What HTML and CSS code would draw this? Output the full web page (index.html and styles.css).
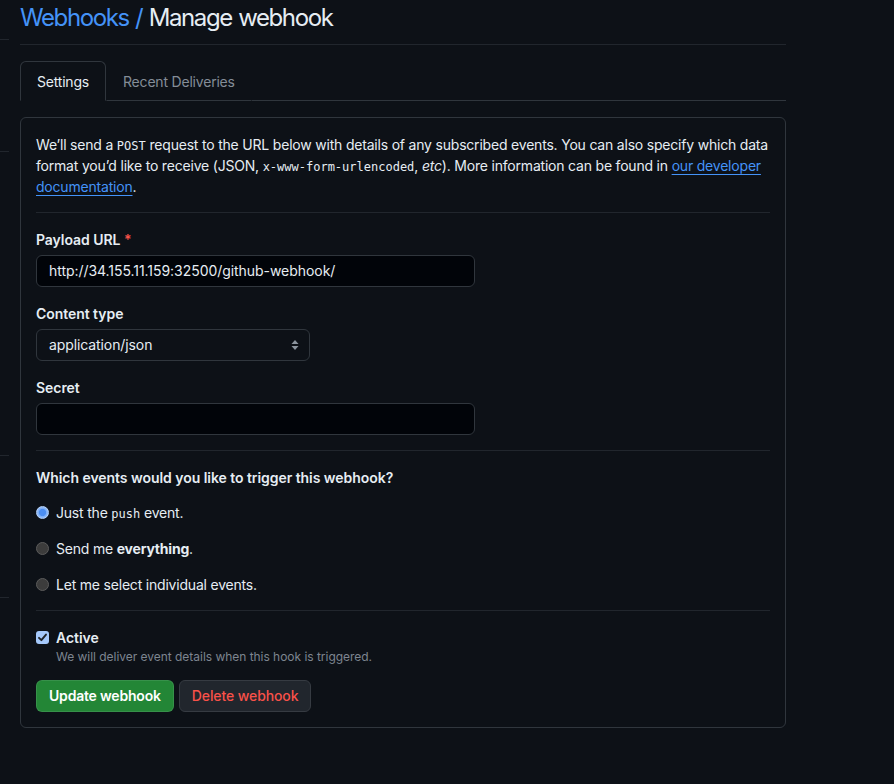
FILE: index.html
```html
<!DOCTYPE html>
<html lang="en">
<head>
<meta charset="utf-8">
<title>Manage webhook</title>
<link rel="stylesheet" href="styles.css">
</head>
<body>
<div class="page">
  <div class="side">
    <div class="side-item h1"></div>
    <div class="side-item h2"></div>
    <div class="side-item h3"></div>
    <div class="side-item h4"></div>
  </div>
  <main class="main">
    <h1 class="title"><a class="crumb" href="#">Webhooks</a><span class="crumb-sep"> / </span>Manage webhook</h1>
    <nav class="tabs">
      <a class="tab tab-selected" href="#">Settings</a>
      <a class="tab" href="#">Recent Deliveries</a>
      <div class="tab-fill"></div>
    </nav>
    <form class="box">
      <p class="intro">We’ll send a <code>POST</code> request to the URL below with details of any subscribed events. You can also specify which data format you’d like to receive (JSON, <code>x-www-form-urlencoded</code>, <em>etc</em>). More information can be found in <a class="link" href="#">our developer documentation</a>.</p>
      <div class="group">
        <label class="label">Payload URL <span class="req">*</span></label>
        <div class="input input-wide">http://34.155.11.159:32500/github-webhook/</div>
        <label class="label">Content type</label>
        <div class="select">
          <span>application/json</span>
          <svg class="caret" width="8" height="12" viewBox="0 0 8 12"><path d="M4 1 L7.5 5 H0.5 Z M4 11 L7.5 7 H0.5 Z" fill="#8b949e"/></svg>
        </div>
        <label class="label">Secret</label>
        <div class="input input-wide"></div>
      </div>
      <div class="group">
        <div class="label">Which events would you like to trigger this webhook?</div>
        <div class="radios">
          <label class="radio-row"><span class="radio radio-on"></span><span>Just the <code>push</code> event.</span></label>
          <label class="radio-row"><span class="radio"></span><span>Send me <strong>everything</strong>.</span></label>
          <label class="radio-row"><span class="radio"></span><span>Let me select individual events.</span></label>
        </div>
      </div>
      <div class="group group-last">
        <label class="check-row">
          <span class="checkbox"><svg width="13" height="13" viewBox="0 0 13 13"><path d="M3 6.8 L5.4 9.2 L10 3.6" fill="none" stroke="#1f2328" stroke-width="1.9" stroke-linecap="round" stroke-linejoin="round"/></svg></span>
          <span class="check-label">Active</span>
        </label>
        <p class="note">We will deliver event details when this hook is triggered.</p>
        <div class="actions">
          <button type="button" class="btn btn-primary">Update webhook</button>
          <button type="button" class="btn btn-danger">Delete webhook</button>
        </div>
      </div>
    </form>
  </main>
</div>
</body>
</html>
```
FILE: styles.css
```css
* { box-sizing: border-box; }
html, body {
  margin: 0;
  background: #0d1117;
  color: #e6edf3;
  font-family: Inter, "Noto Sans", "Liberation Sans", sans-serif;
  font-size: 14px;
  line-height: 21px;
  letter-spacing: -0.2px;
}
.page {
  display: flex;
  min-height: 784px;
}
.side {
  width: 9px;
  flex: none;
  display: flex;
  flex-direction: column;
}
.side-item { border-bottom: 1px solid #21262d; }
.side-item.h1 { height: 40px; }
.side-item.h2 { height: 112px; }
.side-item.h3 { height: 304px; }
.side-item.h4 { height: 142px; }
.main {
  margin-left: 11px;
  width: 766px;
}
.title {
  margin: 3px 0 0;
  padding-bottom: 11px;
  font-size: 24px;
  line-height: 30px;
  font-weight: 400;
  border-bottom: 1px solid #21262d;
  letter-spacing: -1.4px;
  word-spacing: 1px;
}
.crumb { color: #4493f8; text-decoration: none; }
.crumb-sep { color: #4493f8; }
.tabs {
  display: flex;
  margin-top: 16px;
  height: 40px;
}
.tab {
  color: #848d97;
  text-decoration: none;
  padding: 0 16px;
  height: 40px;
  line-height: 40px;
  border: 1px solid transparent;
  border-bottom: 1px solid #30363d;
  border-radius: 6px 6px 0 0;
  font-size: 14px;
}
.tab-selected {
  color: #e6edf3;
  border-color: #30363d;
  border-bottom-color: transparent;
  background: #0d1117;
}
.tab-fill {
  flex: 1;
  border-bottom: 1px solid #30363d;
}
.box {
  display: block;
  margin-top: 16px;
  border: 1px solid #30363d;
  border-radius: 6px;
  padding: 16px 15px 15px;
}
.intro {
  margin: 0;
  padding-bottom: 15px;
  border-bottom: 1px solid #21262d;
  letter-spacing: -0.2px;
}
code {
  font-family: "DejaVu Sans Mono", "Liberation Mono", monospace;
  font-size: 12px;
  line-height: 1;
  letter-spacing: 0;
}
.link { color: #4493f8; text-decoration: underline; text-underline-offset: 3px; }
.group {
  padding: 16px 0 15px;
  border-bottom: 1px solid #21262d;
  display: flex;
  flex-direction: column;
  align-items: flex-start;
}
.group-last { border-bottom: none; padding-bottom: 0; }
.label {
  display: block;
  font-weight: 600;
  margin-bottom: 5px;
  letter-spacing: -0.05px;
}
.req { color: #f85149; }
.input {
  height: 32px;
  background: #010409;
  border: 1px solid #30363d;
  border-radius: 6px;
  padding: 0 12px;
  line-height: 30px;
  margin-bottom: 16px;
  letter-spacing: -0.05px;
}
.input-wide { width: 439px; }
.group .input:last-child { margin-bottom: 0; }
.select {
  width: 274px;
  height: 32px;
  border: 1px solid #30363d;
  border-radius: 6px;
  background: #0d1117;
  padding: 0 12px;
  line-height: 30px;
  margin-bottom: 16px;
  display: flex;
  justify-content: space-between;
  align-items: center;
  letter-spacing: -0.1px;
}
.caret { margin-right: -2px; }
.radios {
  margin-top: 9px;
  display: flex;
  flex-direction: column;
  gap: 15px;
}
.radio-row {
  display: flex;
  align-items: center;
  gap: 7px;
}
.radio {
  width: 13px;
  height: 13px;
  border-radius: 50%;
  background: #3c3c3c;
  border: 1px solid #5b5b5b;
  flex: none;
}
.radio-on {
  background: radial-gradient(circle, #4c8ef0 0 3.2px, #7fb0f7 4px, #a9cbfa 100%);
  border-color: #b8d4fb;
}
.check-row {
  display: flex;
  align-items: center;
  gap: 7px;
}
.checkbox {
  width: 13px;
  height: 13px;
  border-radius: 3px;
  background: #a5c8fa;
  display: flex;
}
.check-label { font-weight: 600; letter-spacing: -0.05px; }
.note {
  margin: 0 0 0 20px;
  font-size: 12px;
  line-height: 18px;
  color: #7d8590;
  letter-spacing: -0.03px;
}
.actions {
  margin-top: 14px;
  display: flex;
  gap: 5px;
}
.btn {
  height: 32px;
  padding: 0 12px;
  border-radius: 6px;
  font-family: inherit;
  font-size: 14px;
  font-weight: 500;
  line-height: 20px;
  letter-spacing: -0.1px;
  border: 1px solid rgba(240, 246, 252, 0.1);
  cursor: pointer;
}
.btn-primary {
  background: #238636;
  color: #ffffff;
  font-weight: 600;
  letter-spacing: -0.2px;
}
.btn-danger {
  background: #21262d;
  color: #f85149;
  border-color: #363b42;
}
```
